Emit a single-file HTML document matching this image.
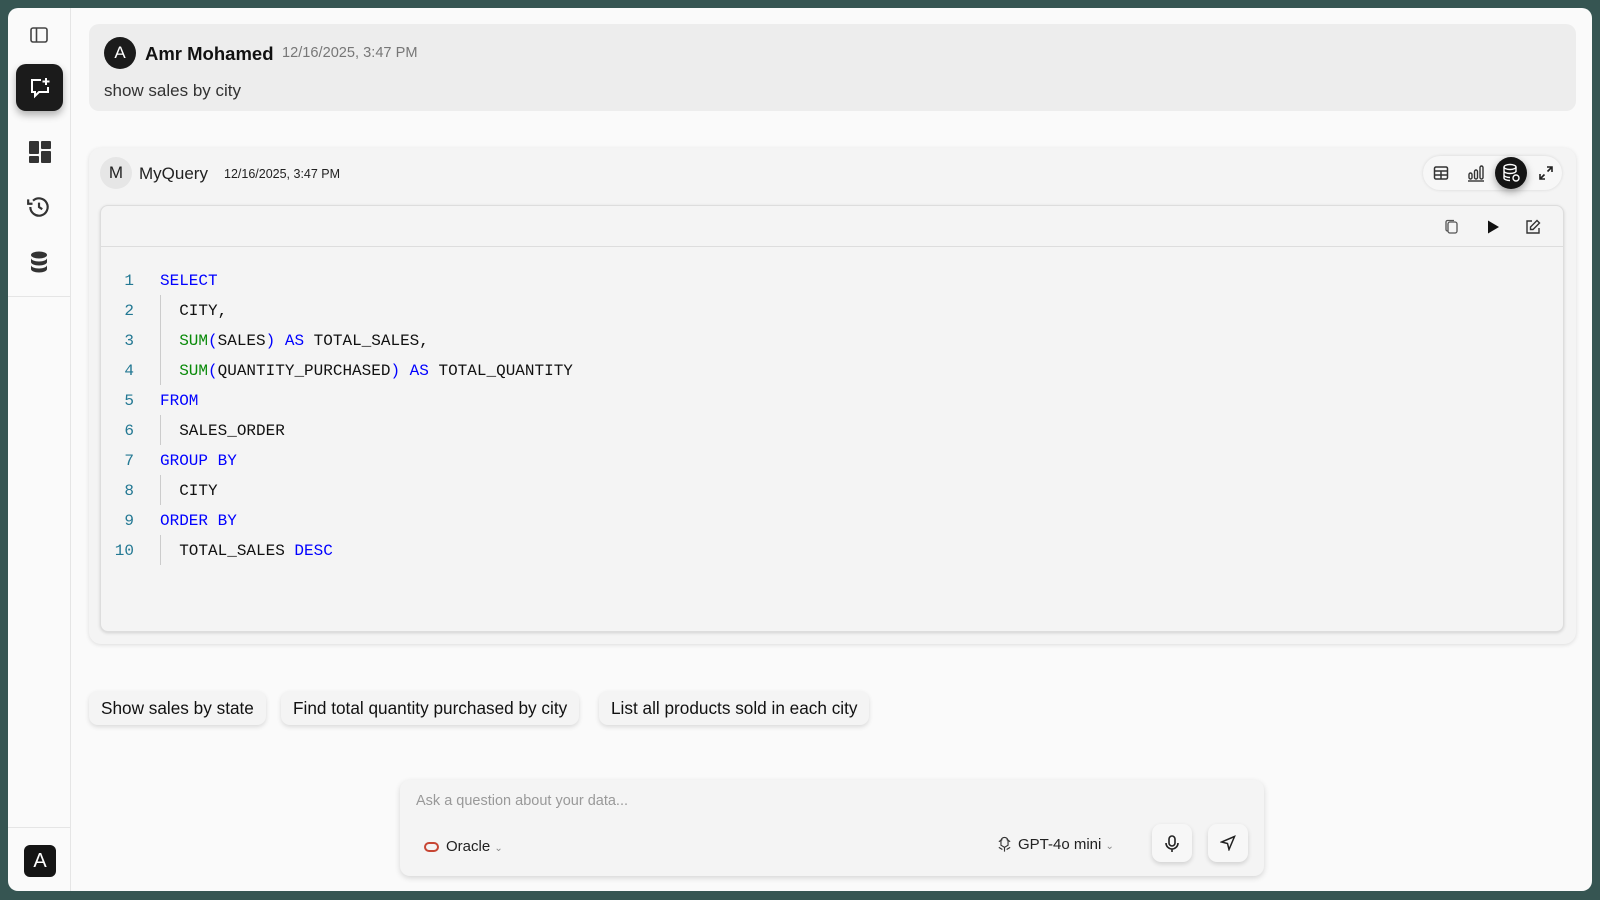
<!DOCTYPE html>
<html><head><meta charset="utf-8"><style>
*{box-sizing:border-box;margin:0;padding:0}
body{width:1600px;height:900px;background:#365552;font-family:"Liberation Sans",sans-serif;position:relative;overflow:hidden}
.app{position:absolute;left:8px;top:8px;width:1584px;height:883px;background:#fafafa;border-radius:10px;overflow:hidden}
.side{position:absolute;left:0;top:0;width:63px;height:100%;border-right:1px solid #e5e5e5}
.abs{position:absolute}
.msg{position:absolute;left:81px;top:16px;width:1487px;height:87px;background:#ededed;border-radius:10px}
.card{position:absolute;left:81px;top:140px;width:1487px;height:496px;background:#f4f4f4;border-radius:12px;box-shadow:0 1px 4px rgba(0,0,0,.12)}
.code{position:absolute;left:11px;top:57px;width:1464px;height:427px;background:#f4f4f4;border:1px solid #ddd;border-radius:8px;box-shadow:0 1px 3px rgba(0,0,0,.15)}
.ln{position:absolute;left:-3px;width:36px;text-align:right;color:#237893;font:16px "Liberation Mono",monospace}
.cl{position:absolute;left:59px;font:16px "Liberation Mono",monospace;color:#111;white-space:pre}
.k{color:#0000ff}.f{color:#098a09}
.guide{position:absolute;left:59px;width:1px;background:#ccc}
.chip{position:absolute;top:683px;height:34px;background:#f4f4f4;border-radius:9px;box-shadow:0 2px 5px rgba(0,0,0,.13);font-size:17.2px;color:#111;line-height:34px;padding:0 12px;white-space:nowrap}
.input{position:absolute;left:392px;top:772px;width:864px;height:96px;background:#f4f4f4;border-radius:10px;box-shadow:0 2px 6px rgba(0,0,0,.15)}
.btn{position:absolute;width:40px;height:38px;background:#f7f7f7;border-radius:9px;box-shadow:0 2px 5px rgba(0,0,0,.15)}
</style></head><body>
<div class="app">
 <div class="side">
  <svg class="abs" style="left:21px;top:17px" width="20" height="20" viewBox="0 0 20 20" fill="none" stroke="#444" stroke-width="1.6"><rect x="2" y="3" width="16" height="14" rx="2"/><line x1="7.5" y1="3" x2="7.5" y2="17"/></svg>
  <div class="abs" style="left:8px;top:56px;width:47px;height:47px;background:#1b1b1b;border-radius:10px;box-shadow:0 4px 8px rgba(0,0,0,.3)"></div>
  <svg class="abs" style="left:20px;top:68px" width="24" height="24" viewBox="0 0 24 24" fill="none" stroke="#fff" stroke-width="2"><path d="M13 4H4v12h3v4l4-4h9V11"/><path d="M18 2v7M14.5 5.5h7"/></svg>
  <svg class="abs" style="left:20px;top:132px" width="24" height="24" viewBox="0 0 24 24" fill="#333"><rect x="1" y="1" width="10" height="13" rx="1"/><rect x="13" y="1" width="10" height="8" rx="1"/><rect x="1" y="16" width="10" height="7" rx="1"/><rect x="13" y="11" width="10" height="12" rx="1"/></svg>
  <svg class="abs" style="left:18px;top:186px" width="26" height="26" viewBox="0 0 24 24" fill="none" stroke="#333" stroke-width="2"><path d="M4 12a8 8 0 1 0 2.5-5.8"/><path d="M2 5v4h4"/><path d="M12 8v4l3 2"/></svg>
  <svg class="abs" style="left:21px;top:243px" width="20" height="22" viewBox="0 0 20 22" fill="#333"><ellipse cx="10" cy="4" rx="8" ry="3.5"/><path d="M2 7c0 2 3.6 3.5 8 3.5s8-1.5 8-3.5v4c0 2-3.6 3.5-8 3.5S2 13 2 11z"/><path d="M2 14c0 2 3.6 3.5 8 3.5s8-1.5 8-3.5v4c0 2-3.6 3.5-8 3.5S2 20 2 18z"/></svg>
  <div class="abs" style="left:0;top:288px;width:63px;height:1px;background:#e5e5e5"></div>
  <div class="abs" style="left:0;top:819px;width:63px;height:1px;background:#e5e5e5"></div>
  <div class="abs" style="left:16px;top:837px;width:32px;height:32px;background:#151515;border-radius:6px;color:#fff;font-size:20px;text-align:center;line-height:32px">A</div>
 </div>
 <div class="msg">
  <div class="abs" style="left:15px;top:13px;width:32px;height:32px;border-radius:50%;background:#1b1b1b;color:#fff;text-align:center;line-height:32px;font-size:17px">A</div>
  <div class="abs" style="left:56px;top:19px;font-size:18.5px;font-weight:bold;color:#111">Amr Mohamed</div>
  <div class="abs" style="left:193px;top:21px;font-size:14.6px;color:#777">12/16/2025, 3:47 PM</div>
  <div class="abs" style="left:15px;top:57px;font-size:17px;color:#333">show sales by city</div>
 </div>
 <div class="card">
  <div class="abs" style="left:11px;top:9px;width:32px;height:32px;border-radius:50%;background:#e6e6e6;color:#222;text-align:center;line-height:32px;font-size:17px">M</div>
  <div class="abs" style="left:50px;top:16px;font-size:17px;color:#222">MyQuery</div>
  <div class="abs" style="left:135px;top:19px;font-size:12.5px;color:#222">12/16/2025, 3:47 PM</div>
  <div class="abs" style="left:1334px;top:8px;width:139px;height:34px;border-radius:17px;background:#f7f7f7;box-shadow:0 0 3px rgba(0,0,0,.12)"></div>
  <svg class="abs" style="left:1344px;top:17px" width="16" height="16" viewBox="0 0 16 16" fill="none" stroke="#333" stroke-width="1.5"><rect x="1.5" y="2" width="13" height="12" rx="1.5"/><path d="M1.5 6h13M1.5 10h13M8 6v8"/></svg>
  <svg class="abs" style="left:1378px;top:16px" width="18" height="18" viewBox="0 0 18 18" fill="none" stroke="#333" stroke-width="1.4"><rect x="2" y="9" width="3" height="6" rx="1.5"/><rect x="7.5" y="6" width="3" height="9" rx="1.5"/><rect x="13" y="2" width="3" height="13" rx="1.5"/><path d="M1 17h16"/></svg>
  <div class="abs" style="left:1406px;top:9px;width:32px;height:32px;border-radius:50%;background:#151515;box-shadow:0 3px 8px rgba(0,0,0,.35)"></div>
  <svg class="abs" style="left:1412px;top:15px" width="20" height="20" viewBox="0 0 20 20" fill="none" stroke="#fff" stroke-width="1.4"><ellipse cx="9" cy="4" rx="6" ry="2.5"/><path d="M3 4v11c0 1.4 2.7 2.5 6 2.5M15 4v5M3 8c0 1.4 2.7 2.5 6 2.5s6-1.1 6-2.5M3 12c0 1.4 2.7 2.5 6 2.5"/><circle cx="15" cy="15" r="3"/></svg>
  <svg class="abs" style="left:1450px;top:18px" width="14" height="14" viewBox="0 0 14 14" fill="none" stroke="#222" stroke-width="1.6"><path d="M8 1h5v5M13 1L8.5 5.5M6 13H1V8M1 13l4.5-4.5"/></svg>
  <div class="code">
   <div class="abs" style="left:0;top:40px;width:100%;height:1px;background:#ddd"></div>
   <svg class="abs" style="left:1343px;top:13px" width="16" height="16" viewBox="0 0 16 16" fill="none" stroke="#555" stroke-width="1.3"><rect x="4" y="3" width="9" height="11" rx="2"/><path d="M4 12H3.5A1.5 1.5 0 0 1 2 10.5V3a1.5 1.5 0 0 1 1.5-1.5H10"/></svg>
   <svg class="abs" style="left:1384px;top:13px" width="16" height="16" viewBox="0 0 16 16"><path d="M3 1.5l11 6.5-11 6.5z" fill="#111"/></svg>
   <svg class="abs" style="left:1424px;top:13px" width="16" height="16" viewBox="0 0 16 16" fill="none" stroke="#333" stroke-width="1.4"><path d="M7 2H2v12h12V9"/><path d="M12 1.5l2.5 2.5L8 10.5H5.5V8z"/></svg>
   <div class="guide" style="top:89px;height:90px"></div>
   <div class="guide" style="top:209px;height:30px"></div>
   <div class="guide" style="top:269px;height:30px"></div>
   <div class="guide" style="top:329px;height:30px"></div>
   <div class="ln" style="top:66px">1</div><div class="cl" style="top:66px"><span class="k">SELECT</span></div>
   <div class="ln" style="top:96px">2</div><div class="cl" style="top:96px">  CITY,</div>
   <div class="ln" style="top:126px">3</div><div class="cl" style="top:126px">  <span class="f">SUM</span><span class="k">(</span>SALES<span class="k">)</span> <span class="k">AS</span> TOTAL_SALES,</div>
   <div class="ln" style="top:156px">4</div><div class="cl" style="top:156px">  <span class="f">SUM</span><span class="k">(</span>QUANTITY_PURCHASED<span class="k">)</span> <span class="k">AS</span> TOTAL_QUANTITY</div>
   <div class="ln" style="top:186px">5</div><div class="cl" style="top:186px"><span class="k">FROM</span></div>
   <div class="ln" style="top:216px">6</div><div class="cl" style="top:216px">  SALES_ORDER</div>
   <div class="ln" style="top:246px">7</div><div class="cl" style="top:246px"><span class="k">GROUP BY</span></div>
   <div class="ln" style="top:276px">8</div><div class="cl" style="top:276px">  CITY</div>
   <div class="ln" style="top:306px">9</div><div class="cl" style="top:306px"><span class="k">ORDER BY</span></div>
   <div class="ln" style="top:336px">10</div><div class="cl" style="top:336px">  TOTAL_SALES <span class="k">DESC</span></div>
  </div>
 </div>
 <div class="chip" style="left:81px">Show sales by state</div>
 <div class="chip" style="left:273px">Find total quantity purchased by city</div>
 <div class="chip" style="left:591px">List all products sold in each city</div>
 <div class="input">
  <div class="abs" style="left:16px;top:13px;font-size:14.5px;color:#999">Ask a question about your data...</div>
  <div class="abs" style="left:24px;top:62px;width:15px;height:10px;border:2px solid #c74634;border-radius:5px"></div>
  <div class="abs" style="left:46px;top:58px;font-size:15px;color:#222">Oracle <span style="font-size:10px;color:#888">&#8964;</span></div>
  <svg class="abs" style="left:596px;top:56px" width="17" height="17" viewBox="0 0 24 24" fill="none" stroke="#333" stroke-width="1.6"><path d="M12 2a5 5 0 0 1 5 5v6l-5 3-5-3V7a5 5 0 0 1 5-5zM4 8l5-3M20 8l-5-3M4 16l5 3M20 16l-5 3M12 22v-6"/></svg>
  <div class="abs" style="left:618px;top:56px;font-size:15px;color:#222">GPT-4o mini <span style="font-size:10px;color:#888">&#8964;</span></div>
  <div class="btn" style="left:752px;top:44px"></div>
  <svg class="abs" style="left:764px;top:55px" width="16" height="18" viewBox="0 0 16 18" fill="none" stroke="#222" stroke-width="1.6"><rect x="5" y="1" width="6" height="10" rx="3"/><path d="M2 8a6 6 0 0 0 12 0M8 14v3"/></svg>
  <div class="btn" style="left:808px;top:44px"></div>
  <svg class="abs" style="left:820px;top:55px" width="16" height="16" viewBox="0 0 16 16" fill="none" stroke="#222" stroke-width="1.5"><path d="M14.5 1.5L1.5 7l6 1.5 1.5 6z"/></svg>
 </div>
</div>
</body></html>
